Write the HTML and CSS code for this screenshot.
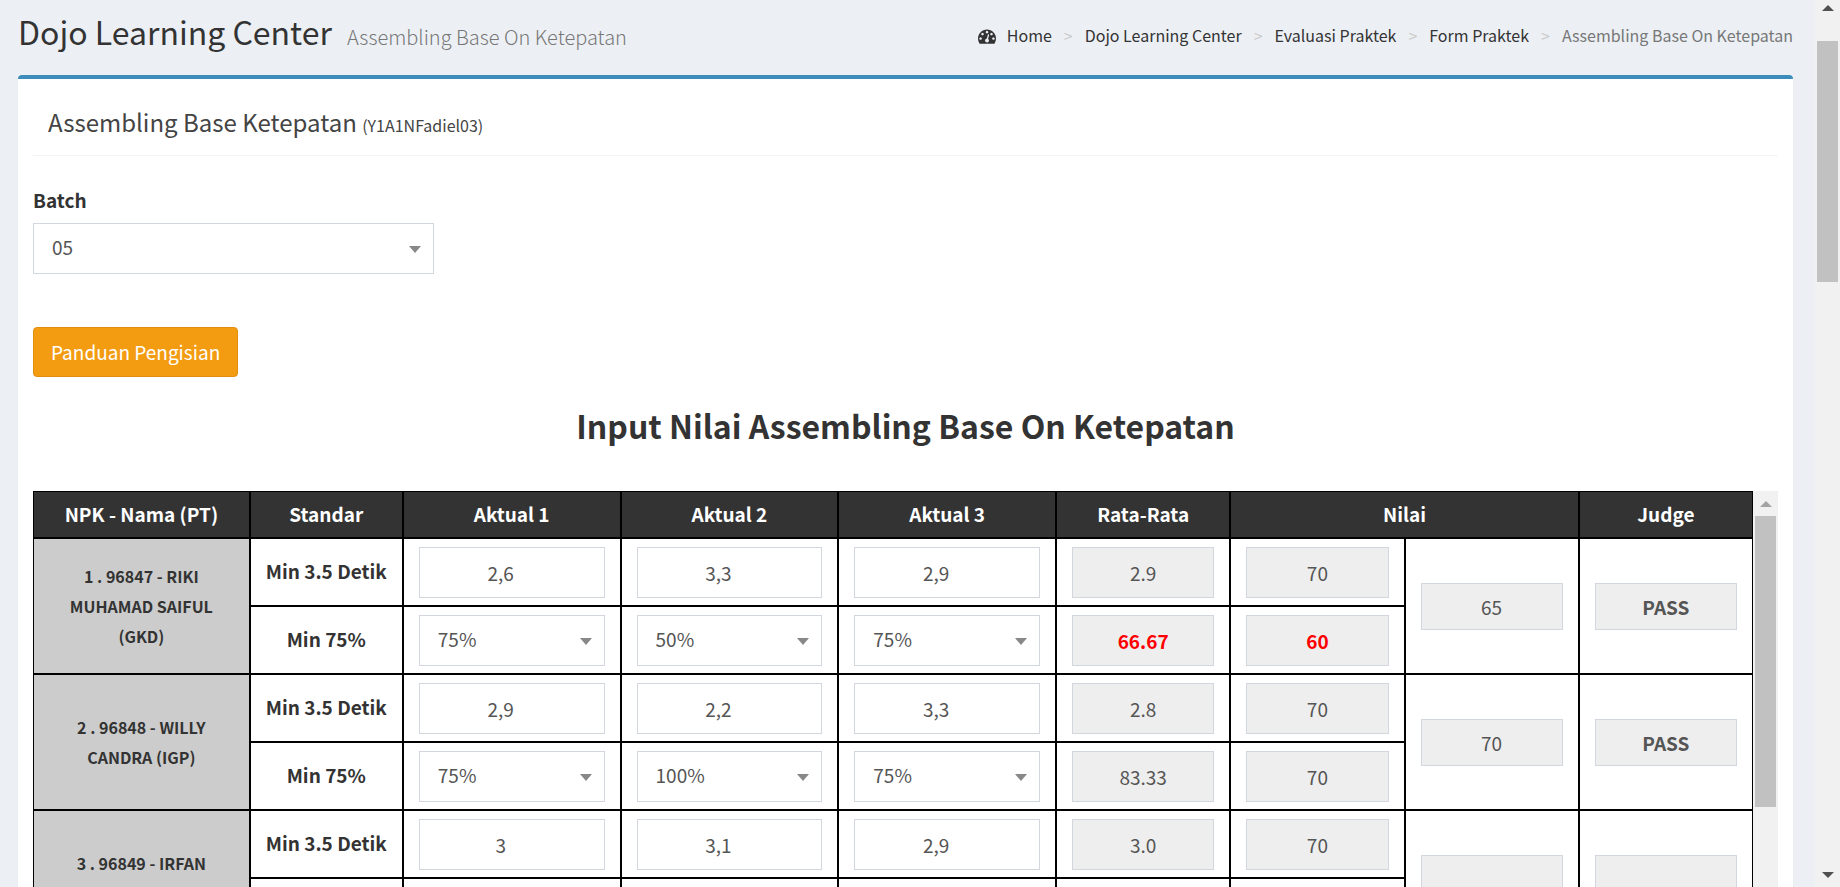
FILE: index.html
```html
<!DOCTYPE html>
<html lang="id">
<head>
<meta charset="utf-8">
<title>Dojo Learning Center</title>
<link rel="stylesheet" href="styles.css">
</head>
<body>
<div class="window">
  <main class="content">
    <header class="content-header">
      <h1 class="page-title">Dojo Learning Center <small class="page-subtitle">Assembling Base On Ketepatan</small></h1>
      <nav aria-label="Breadcrumb">
        <ol class="breadcrumb">
          <li><a href="#"><svg class="icon" viewBox="0 0 1792 1792" aria-hidden="true"><path d="M384 1152q0-53-37.5-90.5t-90.5-37.5-90.5 37.5-37.5 90.5 37.5 90.5 90.5 37.5 90.5-37.5 37.5-90.5zm192-448q0-53-37.5-90.5t-90.5-37.5-90.5 37.5-37.5 90.5 37.5 90.5 90.5 37.5 90.5-37.5 37.5-90.5zm428 481l101-382q6-26-7.5-48.5t-38.5-29.5-48 6.5-30 39.5l-101 382q-60 5-107 43.5t-63 98.5q-20 77 20 146t117 89 146-20 89-117q16-60-6-117t-72-91zm660-33q0-53-37.5-90.5t-90.5-37.5-90.5 37.5-37.5 90.5 37.5 90.5 90.5 37.5 90.5-37.5 37.5-90.5zm-640-640q0-53-37.5-90.5t-90.5-37.5-90.5 37.5-37.5 90.5 37.5 90.5 90.5 37.5 90.5-37.5 37.5-90.5zm448 192q0-53-37.5-90.5t-90.5-37.5-90.5 37.5-37.5 90.5 37.5 90.5 90.5 37.5 90.5-37.5 37.5-90.5zm320 448q0 261-141 483-19 29-54 29h-1402q-35 0-54-29-141-221-141-483 0-182 71-348t191-286 286-191 348-71 348 71 286 191 191 286 71 348z"/></svg>Home</a></li>
          <li><a href="#">Dojo Learning Center</a></li>
          <li><a href="#">Evaluasi Praktek</a></li>
          <li><a href="#">Form Praktek</a></li>
          <li class="current" aria-current="page">Assembling Base On Ketepatan</li>
        </ol>
      </nav>
    </header>

    <section class="box">
      <h2 class="box-title">Assembling Base Ketepatan <small class="box-code">(Y1A1NFadiel03)</small></h2>

      <div class="batch">
        <label class="batch-label" for="batch">Batch</label>
        <select class="field select" id="batch"><option>05</option></select>
      </div>

      <button class="button" type="button">Panduan Pengisian</button>

      <h3 class="table-title">Input Nilai Assembling Base On Ketepatan</h3>

      <div class="scores-scroll">
        <table class="scores">
          <colgroup>
            <col class="col-name"><col class="col-standard">
            <col class="col-actual"><col class="col-actual"><col class="col-actual">
            <col class="col-score"><col class="col-score"><col class="col-score"><col class="col-score">
          </colgroup>
          <thead>
            <tr>
              <th scope="col">NPK - Nama (PT)</th>
              <th scope="col">Standar</th>
              <th scope="col">Aktual 1</th>
              <th scope="col">Aktual 2</th>
              <th scope="col">Aktual 3</th>
              <th scope="col">Rata-Rata</th>
              <th scope="col" colspan="2">Nilai</th>
              <th scope="col">Judge</th>
            </tr>
          </thead>
          <tbody>
            <tr>
              <th class="name" scope="rowgroup" rowspan="2">1 . 96847 - RIKI MUHAMAD SAIFUL (GKD)</th>
              <th class="standard" scope="row">Min 3.5 Detik</th>
              <td><input class="field number" inputmode="decimal" aria-label="Aktual 1" value="2,6"></td>
              <td><input class="field number" inputmode="decimal" aria-label="Aktual 2" value="3,3"></td>
              <td><input class="field number" inputmode="decimal" aria-label="Aktual 3" value="2,9"></td>
              <td><input class="field result" readonly aria-label="Rata-Rata" value="2.9"></td>
              <td><input class="field result" readonly aria-label="Nilai" value="70"></td>
              <td rowspan="2"><input class="field result total" readonly aria-label="Nilai" value="65"></td>
              <td rowspan="2"><input class="field result total judge" readonly aria-label="Judge" value="PASS"></td>
            </tr>
            <tr>
              <th class="standard" scope="row">Min 75%</th>
              <td><select class="field select" aria-label="Aktual 1"><option>75%</option></select></td>
              <td><select class="field select" aria-label="Aktual 2"><option>50%</option></select></td>
              <td><select class="field select" aria-label="Aktual 3"><option>75%</option></select></td>
              <td><input class="field result failed" readonly aria-label="Rata-Rata" value="66.67"></td>
              <td><input class="field result failed" readonly aria-label="Nilai" value="60"></td>
            </tr>
            <tr>
              <th class="name" scope="rowgroup" rowspan="2">2 . 96848 - WILLY CANDRA (IGP)</th>
              <th class="standard" scope="row">Min 3.5 Detik</th>
              <td><input class="field number" inputmode="decimal" aria-label="Aktual 1" value="2,9"></td>
              <td><input class="field number" inputmode="decimal" aria-label="Aktual 2" value="2,2"></td>
              <td><input class="field number" inputmode="decimal" aria-label="Aktual 3" value="3,3"></td>
              <td><input class="field result" readonly aria-label="Rata-Rata" value="2.8"></td>
              <td><input class="field result" readonly aria-label="Nilai" value="70"></td>
              <td rowspan="2"><input class="field result total" readonly aria-label="Nilai" value="70"></td>
              <td rowspan="2"><input class="field result total judge" readonly aria-label="Judge" value="PASS"></td>
            </tr>
            <tr>
              <th class="standard" scope="row">Min 75%</th>
              <td><select class="field select" aria-label="Aktual 1"><option>75%</option></select></td>
              <td><select class="field select" aria-label="Aktual 2"><option>100%</option></select></td>
              <td><select class="field select" aria-label="Aktual 3"><option>75%</option></select></td>
              <td><input class="field result" readonly aria-label="Rata-Rata" value="83.33"></td>
              <td><input class="field result" readonly aria-label="Nilai" value="70"></td>
            </tr>
            <tr>
              <th class="name" scope="rowgroup" rowspan="2">3 . 96849 - IRFAN<br>&nbsp;</th>
              <th class="standard" scope="row">Min 3.5 Detik</th>
              <td><input class="field number" inputmode="decimal" aria-label="Aktual 1" value="3"></td>
              <td><input class="field number" inputmode="decimal" aria-label="Aktual 2" value="3,1"></td>
              <td><input class="field number" inputmode="decimal" aria-label="Aktual 3" value="2,9"></td>
              <td><input class="field result" readonly aria-label="Rata-Rata" value="3.0"></td>
              <td><input class="field result" readonly aria-label="Nilai" value="70"></td>
              <td rowspan="2"><input class="field result total" readonly aria-label="Nilai"></td>
              <td rowspan="2"><input class="field result total judge" readonly aria-label="Judge"></td>
            </tr>
            <tr>
              <th class="standard" scope="row"></th>
              <td></td>
              <td></td>
              <td></td>
              <td></td>
              <td></td>
            </tr>
          </tbody>
        </table>
        <div class="scrollbar scrollbar-table" aria-hidden="true">
          <svg class="arrow" viewBox="0 0 12 6"><path d="M0 6L6 0L12 6Z"/></svg>
          <div class="thumb"></div>
        </div>
      </div>
    </section>
  </main>

  <div class="scrollbar scrollbar-page" aria-hidden="true">
    <svg class="arrow" viewBox="0 0 12 6"><path d="M0 6L6 0L12 6Z"/></svg>
    <div class="thumb"></div>
    <svg class="arrow arrow-down" viewBox="0 0 12 6"><path d="M0 0L12 0L6 6Z"/></svg>
  </div>
</div>
</body>
</html>
```

FILE: styles.css
```css
* {
  box-sizing: border-box;
}

body {
  margin: 0;
  background: #ecf0f5;
  color: #333;
  font-family: "Noto Sans CJK SC", "Noto Sans", sans-serif;
  font-size: 19px;
  line-height: 30px;
}

.window {
  display: flex;
  height: 100vh;
  overflow: hidden;
}

.content {
  flex: 1;
  min-width: 0;
  padding: 9px 22px 0 18px;
}

/* Page header */
.content-header {
  display: flex;
  justify-content: space-between;
  align-items: flex-start;
  padding-bottom: 22px;
}

.page-title {
  margin: 0;
  font-size: 32px;
  font-weight: 400;
  line-height: 44px;
}

.page-subtitle {
  padding-left: 8px;
  color: #777;
  font-size: 20px;
  font-weight: 300;
  line-height: 1;
}

.breadcrumb {
  display: flex;
  margin: 0;
  padding: 11px 0 0;
  list-style: none;
  font-size: 16px;
}

.breadcrumb a {
  color: #333;
  text-decoration: none;
}

.breadcrumb li + li::before {
  content: ">";
  padding: 0 12px;
  color: #ccc;
}

.breadcrumb .current {
  color: #777;
}

.icon {
  width: 18px;
  height: 18px;
  margin-right: 11px;
  vertical-align: -3px;
  fill: currentColor;
}

/* Box */
.box {
  padding: 0 15px;
  background: #fff;
  border-top: 4px solid #3c8dbc;
  border-radius: 4px;
  box-shadow: 0 1px 1px rgba(0, 0, 0, 0.1);
}

.box-title {
  margin: 0;
  padding: 27px 15px 18px;
  border-bottom: 1px solid #f4f4f4;
  font-size: 24px;
  font-weight: 400;
  line-height: 31px;
  color: #444;
}

.box-code {
  font-size: 16px;
  line-height: 1;
}

.batch {
  width: 23%;
  padding-top: 29px;
}

.batch-label {
  display: block;
  padding-bottom: 8px;
  font-weight: 700;
}

.button {
  display: block;
  height: 50px;
  margin: 53px 0 0;
  padding: 0 17px 1px;
  background: #f39c12;
  border: 1px solid #e08e0b;
  border-radius: 4px;
  color: #fff;
  font: inherit;
}

.table-title {
  margin: 0;
  padding: 26px 0 44px;
  font-size: 32px;
  font-weight: 700;
  line-height: 44px;
  text-align: center;
}

/* Form fields */
.field {
  display: block;
  width: 100%;
  height: 51px;
  margin: 0;
  border: 1px solid #d2d6de;
  border-radius: 0;
  background: #fff;
  color: #555;
  font: inherit;
}

.select {
  appearance: none;
  padding: 0 18px 3px;
  background: #fff url("data:image/svg+xml,%3Csvg xmlns='http://www.w3.org/2000/svg' viewBox='0 0 12 7'%3E%3Cpath d='M0 0H12L6 7Z' fill='%23888'/%3E%3C/svg%3E") no-repeat right 12px top 22px / 12px 7px;
}

.number {
  padding: 0 40px 1px 18px;
  text-align: center;
}

.result {
  padding: 0 18px 1px;
  background: #eee;
  text-align: center;
}

.total {
  height: 47px;
}

.judge {
  font-weight: 700;
}

.failed {
  color: #f00;
  font-weight: 700;
}

/* Score table */
.scores-scroll {
  display: flex;
}

.scores {
  flex: 1;
  table-layout: fixed;
  border-spacing: 0;
}

.col-name {
  width: 12.6%;
}

.col-standard {
  width: 8.9%;
}

.col-actual {
  width: 12.66%;
}

.col-score {
  width: 10.13%;
}

.scores th,
.scores td {
  height: 68px;
  padding: 8px 15px 7px;
  border: 1px solid #000;
  text-align: center;
  vertical-align: middle;
}

.scores thead th {
  height: 47px;
  padding: 0 0 2px;
  background: #333;
  color: #fff;
}

.scores .name {
  padding: 0 30px;
  background: #ccc;
  font-size: 16px;
}

.scores .standard {
  padding: 0 0 2px;
}

/* Scrollbars */
.scrollbar {
  display: flex;
  flex-direction: column;
  flex: none;
  align-items: center;
  background: #f1f1f1;
}

.arrow {
  width: 12px;
  height: 6px;
  fill: #505050;
}

.thumb {
  width: 21px;
  background: #c1c1c1;
}

.scrollbar-page {
  width: 25px;
  padding: 5px 0 9px;
}

.scrollbar-page .thumb {
  height: 241px;
  margin-top: 30px;
}

.arrow-down {
  margin-top: auto;
}

.scrollbar-table {
  width: 25px;
  padding-top: 10px;
}

.scrollbar-table .arrow {
  fill: #a3a3a3;
}

.scrollbar-table .thumb {
  height: 291px;
  margin-top: 9px;
}
```
